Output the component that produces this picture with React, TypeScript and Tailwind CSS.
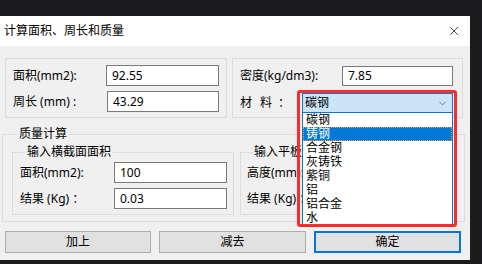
import { ChevronDown, X } from 'lucide-react';

const inputCls =
  'h-[21px] border border-[#7a7a7a] bg-white pl-[5px] text-[12px] leading-[19px] text-black';

function Field({ label, value, width }: { label: string; value: string; width: string }) {
  return (
    <div className="flex items-center justify-between">
      <span className="text-[12px] leading-[16px] text-black whitespace-pre">{label}</span>
      <div className={`${inputCls} ${width}`}>{value}</div>
    </div>
  );
}

const materials = ['碳钢', '铸钢', '合金钢', '灰铸铁', '紫铜', '铝', '铝合金', '水'];

export default function App() {
  return (
    <div className="w-[482px] h-[264px] bg-[#1c1c1f] pt-[16px] font-['Noto_Sans','Noto_Sans_CJK_SC',sans-serif] text-black">
      <div className="w-[470px] h-[244px] flex flex-col">
        {/* title bar */}
        <div className="h-[30px] bg-white flex items-center justify-between pl-[4px] pr-[9px]">
          <span className="text-[12px] leading-[16px]">计算面积、周长和质量</span>
          <X size={14} strokeWidth={1.2} className="text-black" />
        </div>

        <div className="relative flex-1 bg-[#f0f0f0] flex flex-col">
          {/* top groups */}
          <div className="mt-[12px] flex gap-[5px] pl-[5px]">
            <div className="w-[222px] h-[60px] border border-[#dcdcdc] pt-[6px] px-[7px] flex flex-col gap-[5px]">
              <Field label="面积(mm2):" value="92.55" width="w-[113px]" />
              <Field label="周长 (mm) :" value="43.29" width="w-[112px]" />
            </div>
            <div className="w-[231px] h-[60px] border border-[#dcdcdc] pt-[7px] pl-[7px] pr-[9px] flex flex-col gap-[7px]">
              <div className="flex items-center justify-between">
                <span className="text-[12px] leading-[16px]">密度(kg/dm3):</span>
                <div className="h-[20px] w-[111px] border border-[#7a7a7a] bg-white pl-[5px] text-[12px] leading-[18px]">
                  7.85
                </div>
              </div>
              <div className="flex items-center justify-between">
                <span className="flex text-[12px] leading-[16px]">
                  <span>材</span>
                  <span className="ml-[8px]">料</span>
                  <span className="ml-[6px]">：</span>
                </span>
                <div className="h-[20px] w-[151px] border border-[#0078d7] bg-[#cce4f7] pl-[2px] pr-[4px] flex items-center justify-between">
                  <span className="text-[12px] leading-[16px]">碳钢</span>
                  <ChevronDown size={11} strokeWidth={1.3} className="text-[#333]" />
                </div>
              </div>
            </div>
          </div>

          {/* quality group */}
          <fieldset className="mt-[8px] ml-[2px] w-[463px] border border-[#dcdcdc] pb-[6px] pl-[9px]">
            <legend className="ml-[5px] px-[2px] text-[12px] leading-[16px]">质量计算</legend>
            <div className="flex gap-[6px] mt-[2px]">
              <fieldset className="w-[222px] border border-[#dcdcdc] pt-[2px] pl-[7px] pr-[6px] pb-[5px] flex flex-col gap-[5px]">
                <legend className="ml-[5px] px-[2px] text-[12px] leading-[16px]">输入横截面面积</legend>
                <Field label="面积(mm2):" value="100" width="w-[113px]" />
                <Field label="结果 (Kg) ：" value="0.03" width="w-[113px]" />
              </fieldset>
              <fieldset className="w-[217px] border border-[#dcdcdc] pt-[2px] pl-[6px] pr-[6px] pb-[5px] flex flex-col gap-[5px]">
                <legend className="ml-[5px] px-[2px] text-[12px] leading-[16px]">输入平板的尺寸</legend>
                <Field label="高度(mm):" value="10" width="w-[113px]" />
                <Field label="结果 (Kg) ：" value="0.00" width="w-[113px]" />
              </fieldset>
            </div>
          </fieldset>

          {/* buttons */}
          <div className="mt-[9px] pl-[5px] flex gap-[8px]">
            <div className="w-[146px] h-[22px] border border-[#adadad] bg-[#e1e1e1] flex items-center justify-center text-[12px]">
              加上
            </div>
            <div className="w-[147px] h-[22px] border border-[#adadad] bg-[#e1e1e1] flex items-center justify-center text-[12px]">
              减去
            </div>
            <div className="w-[147px] h-[22px] border-2 border-[#0078d7] bg-[#e1e1e1] flex items-center justify-center text-[12px]">
              确定
            </div>
          </div>

          {/* open dropdown list */}
          <div className="absolute left-[302px] top-[67px] w-[151px] h-[113px] bg-white border border-t-0 border-[#0078d7] flex flex-col">
            {materials.map((m, i) => (
              <div
                key={m}
                className={
                  i === 1
                    ? 'h-[14px] leading-[12px] pl-[2px] text-[12px] bg-[#0078d7] text-white border border-dotted border-[#f0a030]'
                    : 'h-[14px] leading-[14px] pl-[3px] text-[12px] text-black'
                }
              >
                {m}
              </div>
            ))}
          </div>

          {/* red annotation */}
          <div className="absolute left-[297px] top-[44px] w-[160px] h-[137px] border-[3px] border-[#ff2a2a] rounded-[3px]" />
        </div>
      </div>
    </div>
  );
}
